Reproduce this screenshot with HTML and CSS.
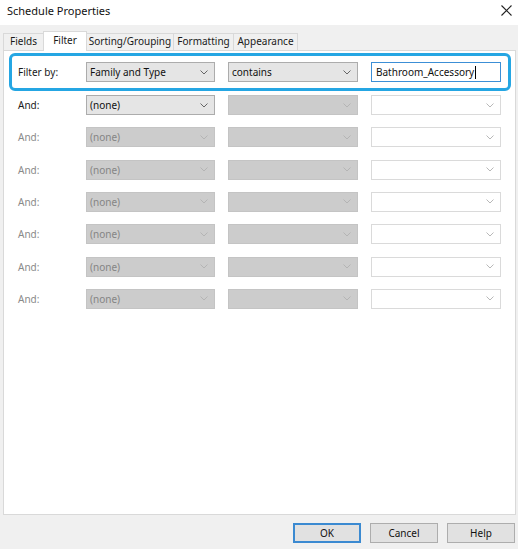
FILE: index.html
```html
<!DOCTYPE html>
<html>
<head>
<meta charset="utf-8">
<link rel="stylesheet" href="styles.css">
</head>
<body>
<div class="dialog">
  <div class="titlebar">
    <span class="title">Schedule Properties</span>
    <svg class="close" width="11" height="11" viewBox="0 0 11 11"><path d="M0.5 0.5 L10.5 10.5 M10.5 0.5 L0.5 10.5" stroke="#222" stroke-width="1.1" fill="none"/></svg>
  </div>
  <div class="body">
    <div class="tabs">
      <div class="tab t-fields">Fields</div>
      <div class="tab t-filter active">Filter</div>
      <div class="tab t-sort">Sorting/Grouping</div>
      <div class="tab t-format">Formatting</div>
      <div class="tab t-appear">Appearance</div>
    </div>
    <div class="panel">
      <div class="row highlight">
        <span class="label">Filter by:</span>
        <div class="sel on"><span>Family and Type</span><svg class="chev" viewBox="0 0 8 5"><path d="M0.5 0.5 L4 4 L7.5 0.5" fill="none" stroke="#666" stroke-width="1"/></svg></div>
        <div class="sel on"><span>contains</span><svg class="chev" viewBox="0 0 8 5"><path d="M0.5 0.5 L4 4 L7.5 0.5" fill="none" stroke="#666" stroke-width="1"/></svg></div>
        <div class="txt"><span>Bathroom_Accessory</span><i class="caret"></i></div>
      </div>
      <div class="rows">
        <div class="row">
          <span class="label">And:</span>
          <div class="sel on"><span>(none)</span><svg class="chev" viewBox="0 0 8 5"><path d="M0.5 0.5 L4 4 L7.5 0.5" fill="none" stroke="#666" stroke-width="1"/></svg></div>
          <div class="sel off"><span></span><svg class="chev" viewBox="0 0 8 5"><path d="M0.5 0.5 L4 4 L7.5 0.5" fill="none" stroke="#b4b4b4" stroke-width="1"/></svg></div>
          <div class="box"><svg class="chev" viewBox="0 0 8 5"><path d="M0.5 0.5 L4 4 L7.5 0.5" fill="none" stroke="#b8b8b8" stroke-width="1"/></svg></div>
        </div>
        <div class="row dis">
          <span class="label">And:</span>
          <div class="sel off"><span>(none)</span><svg class="chev" viewBox="0 0 8 5"><path d="M0.5 0.5 L4 4 L7.5 0.5" fill="none" stroke="#b4b4b4" stroke-width="1"/></svg></div>
          <div class="sel off"><span></span><svg class="chev" viewBox="0 0 8 5"><path d="M0.5 0.5 L4 4 L7.5 0.5" fill="none" stroke="#b4b4b4" stroke-width="1"/></svg></div>
          <div class="box"><svg class="chev" viewBox="0 0 8 5"><path d="M0.5 0.5 L4 4 L7.5 0.5" fill="none" stroke="#b8b8b8" stroke-width="1"/></svg></div>
        </div>
        <div class="row dis">
          <span class="label">And:</span>
          <div class="sel off"><span>(none)</span><svg class="chev" viewBox="0 0 8 5"><path d="M0.5 0.5 L4 4 L7.5 0.5" fill="none" stroke="#b4b4b4" stroke-width="1"/></svg></div>
          <div class="sel off"><span></span><svg class="chev" viewBox="0 0 8 5"><path d="M0.5 0.5 L4 4 L7.5 0.5" fill="none" stroke="#b4b4b4" stroke-width="1"/></svg></div>
          <div class="box"><svg class="chev" viewBox="0 0 8 5"><path d="M0.5 0.5 L4 4 L7.5 0.5" fill="none" stroke="#b8b8b8" stroke-width="1"/></svg></div>
        </div>
        <div class="row dis">
          <span class="label">And:</span>
          <div class="sel off"><span>(none)</span><svg class="chev" viewBox="0 0 8 5"><path d="M0.5 0.5 L4 4 L7.5 0.5" fill="none" stroke="#b4b4b4" stroke-width="1"/></svg></div>
          <div class="sel off"><span></span><svg class="chev" viewBox="0 0 8 5"><path d="M0.5 0.5 L4 4 L7.5 0.5" fill="none" stroke="#b4b4b4" stroke-width="1"/></svg></div>
          <div class="box"><svg class="chev" viewBox="0 0 8 5"><path d="M0.5 0.5 L4 4 L7.5 0.5" fill="none" stroke="#b8b8b8" stroke-width="1"/></svg></div>
        </div>
        <div class="row dis">
          <span class="label">And:</span>
          <div class="sel off"><span>(none)</span><svg class="chev" viewBox="0 0 8 5"><path d="M0.5 0.5 L4 4 L7.5 0.5" fill="none" stroke="#b4b4b4" stroke-width="1"/></svg></div>
          <div class="sel off"><span></span><svg class="chev" viewBox="0 0 8 5"><path d="M0.5 0.5 L4 4 L7.5 0.5" fill="none" stroke="#b4b4b4" stroke-width="1"/></svg></div>
          <div class="box"><svg class="chev" viewBox="0 0 8 5"><path d="M0.5 0.5 L4 4 L7.5 0.5" fill="none" stroke="#b8b8b8" stroke-width="1"/></svg></div>
        </div>
        <div class="row dis">
          <span class="label">And:</span>
          <div class="sel off"><span>(none)</span><svg class="chev" viewBox="0 0 8 5"><path d="M0.5 0.5 L4 4 L7.5 0.5" fill="none" stroke="#b4b4b4" stroke-width="1"/></svg></div>
          <div class="sel off"><span></span><svg class="chev" viewBox="0 0 8 5"><path d="M0.5 0.5 L4 4 L7.5 0.5" fill="none" stroke="#b4b4b4" stroke-width="1"/></svg></div>
          <div class="box"><svg class="chev" viewBox="0 0 8 5"><path d="M0.5 0.5 L4 4 L7.5 0.5" fill="none" stroke="#b8b8b8" stroke-width="1"/></svg></div>
        </div>
        <div class="row dis">
          <span class="label">And:</span>
          <div class="sel off"><span>(none)</span><svg class="chev" viewBox="0 0 8 5"><path d="M0.5 0.5 L4 4 L7.5 0.5" fill="none" stroke="#b4b4b4" stroke-width="1"/></svg></div>
          <div class="sel off"><span></span><svg class="chev" viewBox="0 0 8 5"><path d="M0.5 0.5 L4 4 L7.5 0.5" fill="none" stroke="#b4b4b4" stroke-width="1"/></svg></div>
          <div class="box"><svg class="chev" viewBox="0 0 8 5"><path d="M0.5 0.5 L4 4 L7.5 0.5" fill="none" stroke="#b8b8b8" stroke-width="1"/></svg></div>
        </div>
      </div>
    </div>
    <div class="footer">
      <div class="btn default">OK</div>
      <div class="btn">Cancel</div>
      <div class="btn">Help</div>
    </div>
  </div>
</div>
</body>
</html>
```
FILE: styles.css
```css
* { box-sizing: border-box; }
html, body { margin: 0; padding: 0; }
body {
  width: 518px;
  height: 549px;
  overflow: hidden;
  font-family: "Noto Sans", "Open Sans", sans-serif;
  font-size: 10px;
  color: #1a1a1a;
  background: #f0f0f0;
}
.dialog {
  width: 518px;
  height: 549px;
  display: flex;
  flex-direction: column;
}
.titlebar {
  height: 25px;
  background: #ffffff;
  display: flex;
  align-items: center;
  justify-content: space-between;
  padding: 0 6px 4px 7px;
}
.title {
  font-size: 11px;
  color: #111;
}
.close { display: block; }
.body {
  flex: 1;
  background: #f0f0f0;
  display: flex;
  flex-direction: column;
  padding: 6px 2px 0 3px;
}
.tabs {
  display: flex;
  height: 19px;
  align-items: flex-end;
  position: relative;
  z-index: 1;
}
.tab {
  height: 17px;
  border: 1px solid #d9d9d9;
  border-bottom: none;
  background: #f0f0f0;
  line-height: 15px;
  margin-right: -1px;
  color: #1a1a1a;
  text-align: center;
}
.t-fields { width: 41px; }
.t-filter { width: 44px; }
.t-sort { width: 88px; }
.t-format { width: 61px; }
.t-appear { width: 65px; }
.tab.active {
  height: 20px;
  margin-bottom: -1px;
  background: #ffffff;
  line-height: 16px;
}
.panel {
  height: 465px;
  background: #ffffff;
  border: 1px solid #d9d9d9;
  padding: 2px 0 0 0;
}
.row {
  display: grid;
  grid-template-columns: 55px 129px 130px 130px;
  column-gap: 13px;
  align-items: center;
  height: 20px;
}
.highlight {
  height: 38px;
  width: 502px;
  border: 3px solid #25a6e3;
  border-radius: 6px;
  padding-left: 6px;
  margin-left: 5px;
}
.rows {
  display: flex;
  flex-direction: column;
  gap: 12.33px;
  margin-top: 4px;
  padding-left: 14px;
}
.sel, .txt, .box {
  height: 20px;
  display: flex;
  align-items: center;
  justify-content: space-between;
  padding: 0 6px 0 3px;
  border: 1px solid #acacac;
}
.sel.on { background: #e5e5e5; color: #111; }
.sel.off { background: #cccccc; border-color: #c4c4c4; color: #858585; }
.txt {
  background: #ffffff;
  border-color: #3c8fd6;
  justify-content: flex-start;
  padding-left: 4px;
  color: #111;
}
.caret {
  display: block;
  width: 1px;
  height: 13px;
  background: #000;
  margin-left: 1px;
}
.box {
  background: #ffffff;
  border-color: #dadada;
  justify-content: flex-end;
}
.chev { width: 8px; height: 5px; display: block; }
.dis .label { color: #8a8a8a; }
.footer {
  flex: 1;
  display: flex;
  justify-content: flex-end;
  align-items: flex-start;
  gap: 9px;
  padding: 8px 1px 0 0;
}
.btn {
  width: 68px;
  height: 20px;
  border: 1px solid #adadad;
  background: #e1e1e1;
  display: flex;
  align-items: center;
  justify-content: center;
  color: #111;
}
.btn.default { border: 2px solid #3b8ad1; }
```
